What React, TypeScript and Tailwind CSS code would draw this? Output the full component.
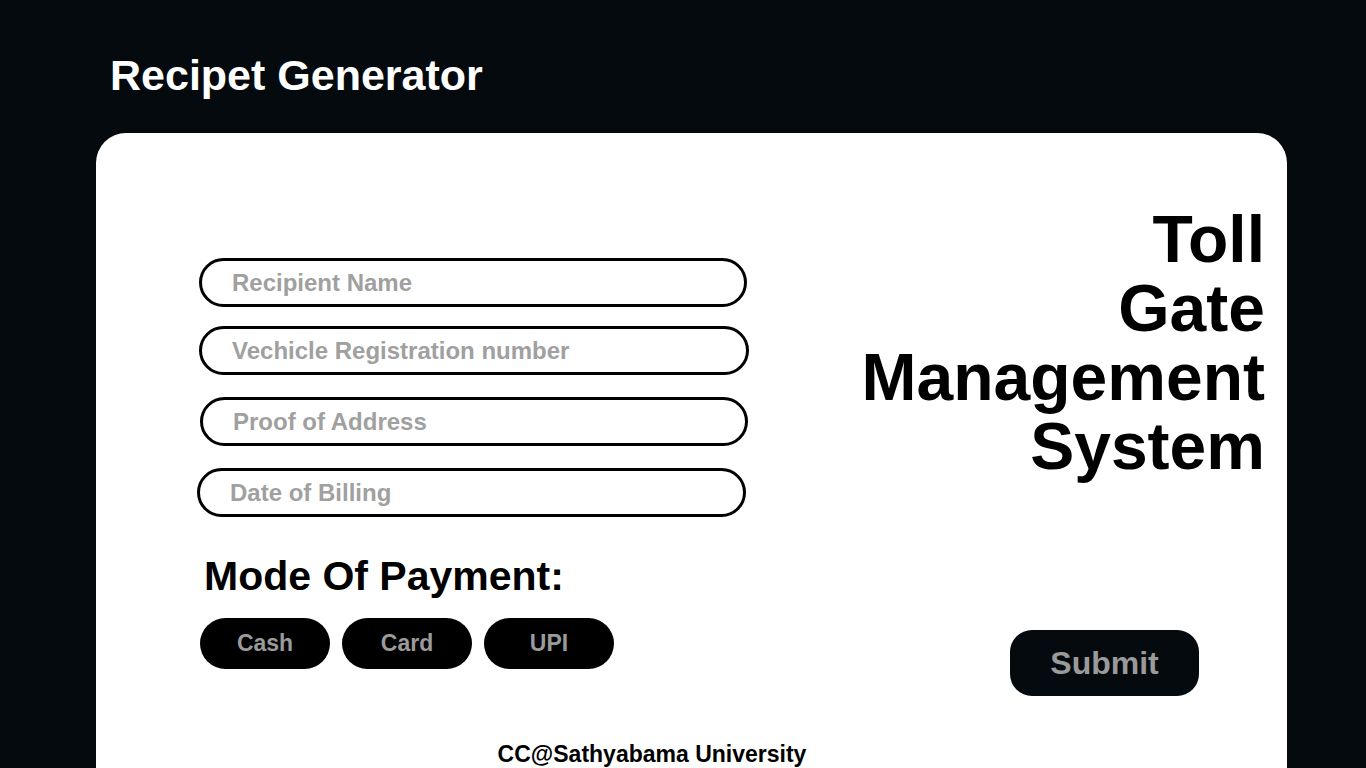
import React from "react";

const fields = [
  { label: "Recipient Name", cls: "ml-[103px] w-[548px] mt-0" },
  { label: "Vechicle Registration number", cls: "ml-[103px] w-[550px] mt-[19px]" },
  { label: "Proof of Address", cls: "ml-[104px] w-[548px] mt-[22px]" },
  { label: "Date of Billing", cls: "ml-[101px] w-[549px] mt-[22px]" },
];

const modes = ["Cash", "Card", "UPI"];

export default function App() {
  return (
    <div
      className="min-h-screen bg-[#040a0d] overflow-hidden"
      style={{ fontFamily: "'Liberation Sans', Arial, sans-serif" }}
    >
      {/* header */}
      <div className="pt-[54px] pl-[110px] h-[133px]">
        <h1 className="text-white font-bold text-[43px] leading-none">Recipet Generator</h1>
      </div>

      {/* card */}
      <div className="ml-[96px] w-[1191px] bg-white rounded-t-[30px] h-[660px] pt-[72px]">
        <div className="flex">
          {/* form */}
          <div className="w-[760px] shrink-0 pt-[53px]">
            {fields.map((f) => (
              <div
                key={f.label}
                className={`${f.cls} h-[49px] rounded-full border-[3px] border-black flex items-center pl-[30px]`}
              >
                <span className="text-[#a0a0a0] font-bold text-[24px] leading-none">{f.label}</span>
              </div>
            ))}

            <div className="ml-[108px] mt-[39px] text-black font-bold text-[41px] leading-none">
              Mode Of Payment:
            </div>

            <div className="ml-[104px] mt-[21px] flex gap-[12px]">
              {modes.map((m) => (
                <button
                  key={m}
                  className="w-[130px] h-[51px] rounded-full bg-black text-[#9a9a9a] font-bold text-[23px]"
                >
                  {m}
                </button>
              ))}
            </div>
          </div>

          {/* title + submit */}
          <div className="flex-1 flex flex-col items-start pr-[22px]">
            <div className="self-stretch text-right text-black font-bold text-[66px] leading-[69px]">
              <div>Toll</div>
              <div>Gate</div>
              <div>Management</div>
              <div>System</div>
            </div>
            <button className="ml-[154px] mt-[149px] w-[189px] h-[66px] rounded-[22px] bg-[#040a0d] text-[#9a9a9a] font-bold text-[32px]">
              Submit
            </button>
          </div>
        </div>

        <div className="pr-[79px] mt-[47px] text-center text-black font-bold text-[23px] leading-none">
          CC@Sathyabama University
        </div>
      </div>
    </div>
  );
}
